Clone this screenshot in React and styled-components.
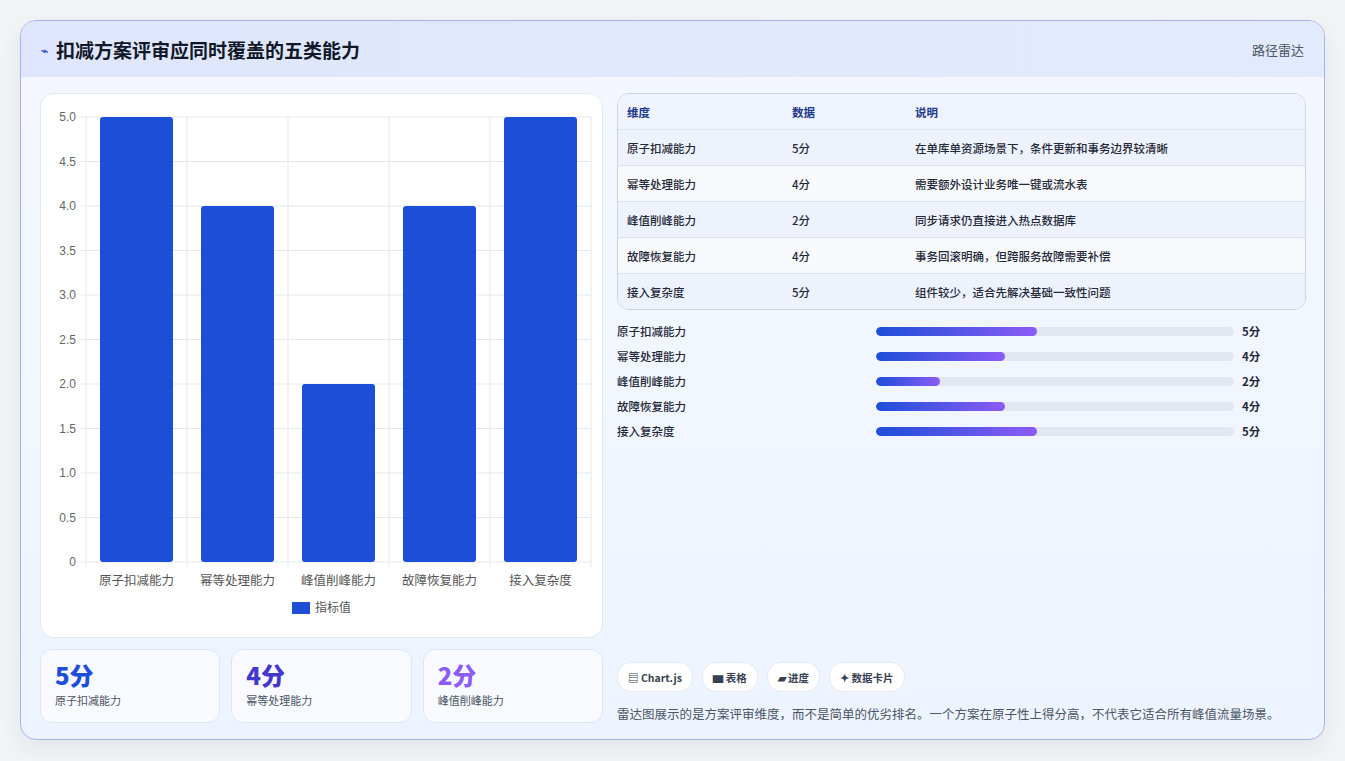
import React from "react";
import styled, { createGlobalStyle } from "styled-components";

const G = createGlobalStyle`
  body{margin:0;background:#f3f4f6;font-family:"Noto Sans CJK SC","Noto Sans",sans-serif;}
`;
const Page = styled.div`padding:20px;height:761px;box-sizing:border-box;background:#f3f4f6;`;
const Card = styled.div`
  width:1305px;height:720px;box-sizing:border-box;border:1px solid #a5b4e8;border-radius:16px;overflow:hidden;
  background:linear-gradient(180deg,#f4f7ff,#eef4ff);box-shadow:0 8px 24px rgba(30,41,59,.08);
  display:flex;flex-direction:column;`;
const Header = styled.div`
  height:56px;flex:none;display:flex;align-items:center;justify-content:space-between;padding:0 20px;
  background:linear-gradient(90deg,#dfe6fd,#e2ebfd);`;
const Title = styled.div`display:flex;align-items:center;gap:8px;font-size:19px;font-weight:700;color:#111827;`;
const Tag = styled.div`font-size:13px;color:#4b5563;`;
const Body = styled.div`flex:1;display:grid;grid-template-columns:563px 1fr;gap:14px;padding:16px 18px 18px 19px;`;
const Left = styled.div`display:flex;flex-direction:column;gap:11px;`;
const ChartBox = styled.div`height:543px;background:#fff;border:1px solid #e2e8f0;border-radius:14px;`;
const Stats = styled.div`display:grid;grid-template-columns:repeat(3,1fr);gap:11px;`;
const Stat = styled.div`height:74px;box-sizing:border-box;background:#f8faff;border:1px solid #dde5f5;border-radius:12px;padding:10px 14px;`;
const Big = styled.div`font-size:24px;font-weight:800;line-height:30px;color:${p=>p.c};`;
const Small = styled.div`font-size:11px;color:#4b5563;margin-top:2px;`;
const Right = styled.div`display:flex;flex-direction:column;`;
const Table = styled.div`border:1px solid #cbd5e6;border-radius:12px;overflow:hidden;`;
const Row = styled.div`display:grid;grid-template-columns:165px 123px 1fr;height:35px;align-items:center;padding-left:9px;
  font-size:11.5px;color:${p=>p.h?"#1e3a8a":"#1f2937"};font-weight:${p=>p.h?600:500};
  background:${p=>p.h?"#eef3fe":p.odd?"#eef2fd":"#f7f9fd"};border-top:${p=>p.first?"none":"1px solid #dbe3f1"};`;
const Bars = styled.div`display:flex;flex-direction:column;gap:7px;margin-top:12px;`;
const BarRow = styled.div`display:grid;grid-template-columns:259px 358px auto;align-items:center;height:18px;font-size:11.5px;color:#1f2937;font-weight:500;`;
const Track = styled.div`height:9px;border-radius:5px;background:#e2e8f0;overflow:hidden;`;
const Fill = styled.div`height:100%;border-radius:5px;background:linear-gradient(90deg,#1d4ed8,#8b5cf6);`;
const Val = styled.div`padding-left:8px;font-weight:700;`;
const Chips = styled.div`margin-top:auto;display:flex;gap:9px;`;
const Chip = styled.div`height:28px;padding:0 10px;border-radius:14px;background:#fff;border:1px solid #e5e9f2;display:flex;align-items:center;gap:4px;font-size:10.5px;font-weight:600;color:#374151;`;
const Note = styled.div`margin-top:12px;font-size:12.5px;color:#4b5563;white-space:nowrap;`;

const cats=["原子扣减能力","幂等处理能力","峰值削峰能力","故障恢复能力","接入复杂度"];
const vals=[5,4,2,4,5];
const desc=["在单库单资源场景下，条件更新和事务边界较清晰","需要额外设计业务唯一键或流水表","同步请求仍直接进入热点数据库","事务回滚明确，但跨服务故障需要补偿","组件较少，适合先解决基础一致性问题"];
const pct=[45,36,18,36,45];

function Chart(){
  const L=45,R=550,T=23,B=468,step=(B-T)/10;
  return <svg width="563" height="543" style={{display:"block"}}>
    {Array.from({length:11}).map((_,i)=>{const y=B-i*step;return <g key={i}>
      <line x1={L-5} x2={R} y1={y} y2={y} stroke="#e5e7eb"/>
      <text x={L-10} y={y+4} textAnchor="end" fontSize="12" fill="#666" fontFamily="Liberation Sans">{i===0?"0":(i/2).toFixed(1)}</text></g>})}
    {Array.from({length:6}).map((_,i)=><line key={i} x1={L+i*101} x2={L+i*101} y1={T} y2={B+5} stroke="#e5e7eb"/>)}
    {vals.map((v,i)=>{const h=v*2*step;return <rect key={i} x={L+i*101+14} y={B-h} width="73" height={h} rx="3" fill="#1d4ed8"/>})}
    {cats.map((c,i)=><text key={i} x={L+i*101+50.5} y={491} textAnchor="middle" fontSize="12.5" fill="#555">{c}</text>)}
    <rect x="251" y="508" width="18" height="12" fill="#1d4ed8"/>
    <text x="274" y="518" fontSize="12" fill="#555">指标值</text>
  </svg>;
}

export default function App(){
  return <Page><G/><Card>
    <Header><Title><span style={{color:"#3b5bdb",fontSize:12}}>⌁</span>扣减方案评审应同时覆盖的五类能力</Title><Tag>路径雷达</Tag></Header>
    <Body>
      <Left>
        <ChartBox><Chart/></ChartBox>
        <Stats>
          <Stat><Big c="#1d4ed8">5分</Big><Small>原子扣减能力</Small></Stat>
          <Stat><Big c="#4338ca">4分</Big><Small>幂等处理能力</Small></Stat>
          <Stat><Big c="#8b5cf6">2分</Big><Small>峰值削峰能力</Small></Stat>
        </Stats>
      </Left>
      <Right>
        <Table>
          <Row h first><div>维度</div><div>数据</div><div>说明</div></Row>
          {cats.map((c,i)=><Row key={i} odd={i%2===0}><div>{c}</div><div>{vals[i]}分</div><div>{desc[i]}</div></Row>)}
        </Table>
        <Bars>
          {cats.map((c,i)=><BarRow key={i}><div>{c}</div><Track><Fill style={{width:pct[i]+"%"}}/></Track><Val>{vals[i]}分</Val></BarRow>)}
        </Bars>
        <Chips>
          <Chip>▤ Chart.js</Chip><Chip>▆ 表格</Chip><Chip>▰ 进度</Chip><Chip>✦ 数据卡片</Chip>
        </Chips>
        <Note>雷达图展示的是方案评审维度，而不是简单的优劣排名。一个方案在原子性上得分高，不代表它适合所有峰值流量场景。</Note>
      </Right>
    </Body>
  </Card></Page>;
}
